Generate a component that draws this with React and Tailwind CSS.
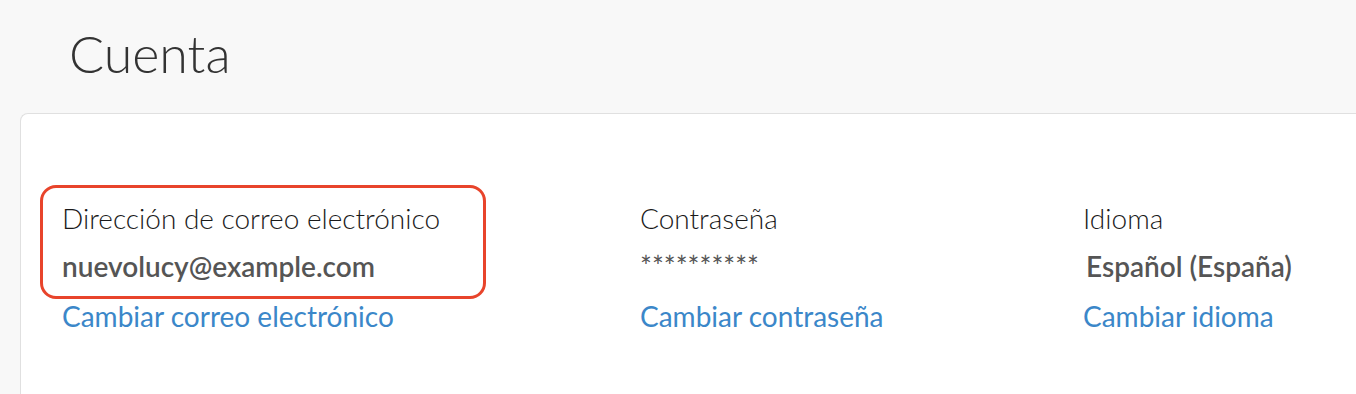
import React from 'react';

const FIELDS = [
  { label: 'Contraseña', value: '**********', link: 'Cambiar contraseña', mask: true },
  { label: 'Idioma', value: 'Español (España)', link: 'Cambiar idioma' },
];

export default function App() {
  return (
    <div className="h-[394px] overflow-hidden bg-[#f8f8f8] font-['Lato','Liberation_Sans',sans-serif]">
      {/* Header */}
      <h1 className="pl-[69px] pt-[27px] text-[52px] leading-none font-light text-[#333]">Cuenta</h1>

      {/* Card */}
      <div className="mt-[34px] ml-[20px] h-[300px] rounded-tl-lg border-l border-t border-[#e0e0e0] bg-white pt-[71px] pl-[19px]">
        <div className="flex">
          {/* Email, highlighted */}
          <div className="w-[600px]">
            <div className="w-[446px] rounded-2xl border-[3px] border-[#e8442b] pl-[19px] pt-[6px] pb-[6px]">
              <div className="text-[28px] leading-[48px] font-light text-[#1a1a1a]">Dirección de correo electrónico</div>
              <div className="text-[28px] leading-[48px] font-semibold text-[#555]">nuevolucy@example.com</div>
            </div>
            <a className="block pl-[22px] text-[28px] leading-[34px] text-[#3b87c9]">Cambiar correo electrónico</a>
          </div>

          {FIELDS.map((f, i) => (
            <div key={f.label} className={i === 0 ? 'w-[443px] pt-[9px]' : 'pt-[9px]'}>
              <div className="text-[28px] leading-[48px] font-light text-[#1a1a1a]">{f.label}</div>
              {f.mask ? (
                <div className="text-[28px] leading-[48px] font-normal text-[#555]">{f.value}</div>
              ) : (
                <div className="pl-[3px] text-[28px] leading-[48px] font-semibold text-[#555]">{f.value}</div>
              )}
              <a className="block pt-[9px] text-[28px] leading-[34px] text-[#3b87c9]">{f.link}</a>
            </div>
          ))}
        </div>
      </div>
    </div>
  );
}
